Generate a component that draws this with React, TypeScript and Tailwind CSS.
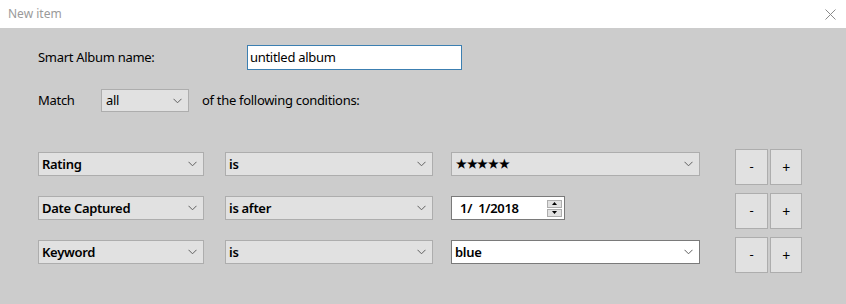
import React from "react";

const Chevron: React.FC = () => (
  <svg width="9" height="6" viewBox="0 0 9 6" className="shrink-0">
    <path d="M0.5 0.8 L4.5 4.8 L8.5 0.8" fill="none" stroke="#606060" strokeWidth="1" />
  </svg>
);

const Select: React.FC<{ value: string; w: string; white?: boolean; small?: boolean }> = ({
  value,
  w,
  white,
  small,
}) => (
  <div
    className={`${w} h-[24px] flex items-center justify-between pl-[3px] pr-[6px] border ${
      white ? "bg-white border-[#7a7a7a]" : "bg-[#e1e1e1] border-[#adadad]"
    }`}
  >
    <span
      className={`font-semibold ${small ? "text-[12px] pl-[1px]" : "text-[13px]"} leading-none text-black`}
    >
      {value}
    </span>
    <Chevron />
  </div>
);

const DateBox: React.FC = () => (
  <div className="w-[114px] h-[24px] bg-white border border-[#7a7a7a] flex items-center justify-between pl-[8px] pr-[2px]">
    <span className="font-semibold text-[13px] leading-none text-black">1/&nbsp; 1/2018</span>
    <div className="flex flex-col gap-[1px]">
      <div className="w-[15px] h-[8px] bg-[#e1e1e1] border border-[#adadad] flex items-center justify-center">
        <svg width="5" height="3" viewBox="0 0 5 3">
          <path d="M0 3 L2.5 0 L5 3 Z" fill="#000" />
        </svg>
      </div>
      <div className="w-[15px] h-[8px] bg-[#e1e1e1] border border-[#adadad] flex items-center justify-center">
        <svg width="5" height="3" viewBox="0 0 5 3">
          <path d="M0 0 L2.5 3 L5 0 Z" fill="#000" />
        </svg>
      </div>
    </div>
  </div>
);

const RowButtons: React.FC = () => (
  <div className="flex gap-[2px] ml-auto mr-[44px]">
    <div className="w-[33px] h-[36px] bg-[#e1e1e1] border border-[#adadad] flex items-center justify-center text-[13px] text-black">
      -
    </div>
    <div className="w-[32px] h-[36px] bg-[#e1e1e1] border border-[#adadad] flex items-center justify-center text-[14px] text-black">
      +
    </div>
  </div>
);

const conditions = [
  { field: "Rating", op: "is", kind: "stars" },
  { field: "Date Captured", op: "is after", kind: "date" },
  { field: "Keyword", op: "is", kind: "keyword" },
];

export default function App() {
  return (
    <div
      className="w-[846px] h-[304px] bg-[#cccccc] flex flex-col tracking-[-0.3px]"
      style={{ fontFamily: '"Noto Sans", "Open Sans", sans-serif' }}
    >
      {/* title bar */}
      <div className="h-[28px] bg-white flex items-center justify-between pl-[8px] pr-[10px] shrink-0">
        <span className="text-[12px] text-[#9a9a9a] tracking-normal">New item</span>
        <svg width="11" height="11" viewBox="0 0 11 11">
          <path d="M0.5 0.5 L10.5 10.5 M10.5 0.5 L0.5 10.5" stroke="#8a8a8a" strokeWidth="1" />
        </svg>
      </div>

      <div className="flex flex-col pl-[38px]">
        <div className="flex items-center mt-[17px] h-[25px]">
          <span className="w-[209px] text-[13px] text-black">Smart Album name:</span>
          <div className="w-[215px] h-[25px] bg-white border border-[#3c7fb1] flex items-center pl-[2px]">
            <span className="text-[13px] text-black">untitled album</span>
          </div>
        </div>

        <div className="flex items-center mt-[19px] h-[23px]">
          <span className="w-[63px] text-[13px] text-black">Match</span>
          <div className="w-[88px] h-[23px] bg-[#e1e1e1] border border-[#adadad] flex items-center justify-between pl-[4px] pr-[6px]">
            <span className="text-[13px] text-black">all</span>
            <Chevron />
          </div>
          <span className="ml-[13px] text-[13px] text-black">of the following conditions:</span>
        </div>

        <div className="flex flex-col gap-[8px] mt-[37px]">
          {conditions.map((c) => (
            <div key={c.field} className="flex items-start h-[36px]">
              <div className="mt-[3px] flex">
                <Select value={c.field} w="w-[166px]" />
                <div className="ml-[21px]">
                  <Select value={c.op} w="w-[208px]" />
                </div>
                <div className="ml-[18px]">
                  {c.kind === "stars" && <Select value="★★★★★" w="w-[249px]" small />}
                  {c.kind === "date" && <DateBox />}
                  {c.kind === "keyword" && <Select value="blue" w="w-[249px]" white />}
                </div>
              </div>
              <RowButtons />
            </div>
          ))}
        </div>
      </div>
    </div>
  );
}
